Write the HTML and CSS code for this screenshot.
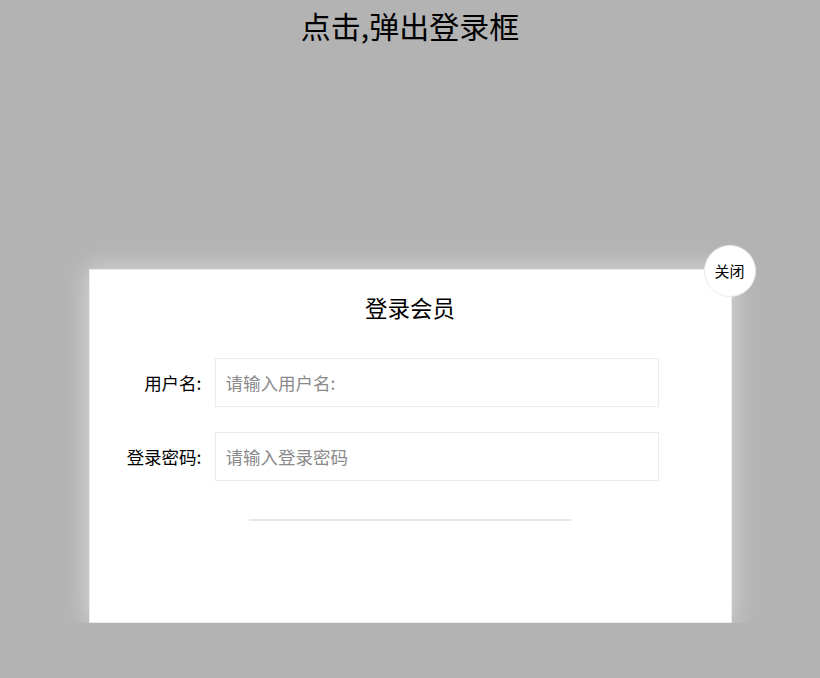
FILE: index.html
```
<!DOCTYPE html>
<html>
<head>
<meta charset="utf-8">
<title>登录弹框</title>
<link rel="stylesheet" href="styles.css">
</head>
<body>

<h1 class="page-title">点击,弹出登录框</h1>

<div class="login">
  <div class="login-title">登录会员
    <span class="close">关闭</span>
  </div>
  <div class="login-input-content">
    <div class="login-input">
      <label for="username">用户名:</label>
      <input type="text" id="username" class="list-input" placeholder="请输入用户名:">
    </div>
    <div class="login-input">
      <label for="password">登录密码:</label>
      <input type="password" id="password" class="list-input" placeholder="请输入登录密码">
    </div>
  </div>
  <div class="login-button"></div>
</div>

</body>
</html>
```

FILE: styles.css
```
body {
  margin: 0;
  padding: 0;
  background-color: #b3b3b3;
  font-family: "Noto Sans CJK SC", "DejaVu Sans", sans-serif;
  color: #000;
}

.page-title {
  margin: 0;
  height: 50px;
  line-height: 50px;
  font-size: 30px;
  font-weight: normal;
  text-align: center;
}

.login {
  position: relative;
  width: 641px;
  height: 352px;
  margin: 219px auto 0 auto;
  background-color: #fff;
  border: 1px solid #ebebeb;
  box-shadow: 0 0 25px #ddd;
}

.login-title {
  position: relative;
  margin-top: 12px;
  height: 50px;
  line-height: 50px;
  font-size: 22.5px;
  text-align: center;
}

.close {
  position: absolute;
  right: -25px;
  top: -37px;
  width: 50px;
  height: 50px;
  line-height: 50px;
  font-size: 15px;
  text-align: center;
  background-color: #fff;
  border: 1px solid #ebebeb;
  border-radius: 50%;
}

.login-input-content {
  margin-top: 26px;
}

.login-input {
  display: flex;
  margin-bottom: 25px;
}

.login-input label {
  width: 112px;
  padding-right: 13px;
  text-align: right;
  line-height: 49px;
  font-size: 17.5px;
}

.list-input {
  width: 444px;
  height: 49px;
  box-sizing: border-box;
  border: 1px solid #ebebeb;
  padding: 0 10px;
  font-family: inherit;
  font-size: 17.5px;
  outline: none;
}

.list-input::placeholder {
  color: #8a8a8a;
}

.login-button {
  width: 320px;
  height: 0;
  margin: 38px auto 0 auto;
  border: 1px solid #e6e6e6;
}
```
